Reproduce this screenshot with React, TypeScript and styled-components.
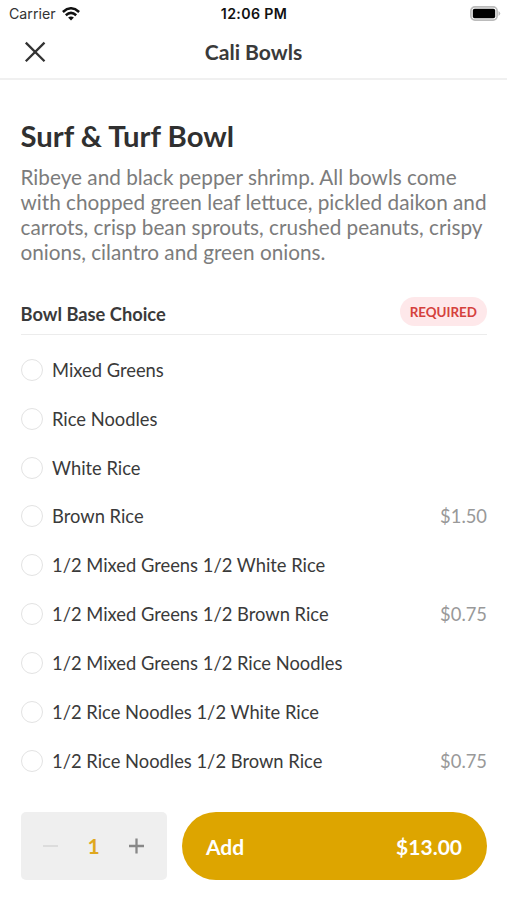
import React from "react";
import styled, { createGlobalStyle } from "styled-components";

const Global = createGlobalStyle`
  *{box-sizing:border-box}
  body{margin:0;background:#fff;font-family:Lato,sans-serif;color:#3a3a3a;overflow:hidden}
  button{font:inherit;border:0;background:none;padding:0;color:inherit}
  h1,h2,p{margin:0}
`;
const Screen = styled.div`height:900px;width:507px;display:flex;flex-direction:column;background:#fff;`;
const StatusBar = styled.div`height:26px;display:grid;grid-template-columns:1fr auto 1fr;align-items:center;padding:1px 6px 0 9px;font:500 14px/20px Inter,sans-serif;color:#111;`;
const Carrier = styled.div`display:flex;align-items:center;gap:6px;font-weight:400;font-size:14.2px;color:#333;`;
const Time = styled.div`font-weight:600;font-size:14.2px;letter-spacing:.35px;margin-right:2px;`;
const Battery = styled.svg`justify-self:end;display:block;`;
const Nav = styled.header`height:54px;display:grid;grid-template-columns:1fr auto 1fr;align-items:center;padding:0 24px;border-bottom:2px solid #f0f0f0;`;
const Close = styled.button`width:22px;height:22px;display:flex;`;
const NavTitle = styled.div`font-size:21.1px;font-weight:700;line-height:24px;`;
const Content = styled.main`flex:1;padding:38px 20px 0 20.5px;`;
const Title = styled.h1`font-size:29.3px;line-height:36px;font-weight:700;color:#303030;`;
const Description = styled.p`margin-top:11px;font-size:20.75px;line-height:25px;color:#7c7c7c;white-space:nowrap;`;
const GroupHead = styled.div`margin-top:32px;height:38px;display:flex;justify-content:space-between;align-items:flex-start;border-bottom:1px solid #ececec;`;
const GroupTitle = styled.h2`font-size:18.3px;font-weight:700;line-height:34px;`;
const Badge = styled.span`height:29px;padding:0 10px;border-radius:15px;background:#fee8ea;color:#d5413d;font-size:13.4px;line-height:31px;font-weight:700;`;
const Options = styled.div`padding-top:10.5px;`;
const Option = styled.div`height:48.85px;display:flex;align-items:center;font-size:18.35px;`;
const Radio = styled.span`width:22px;height:22px;border:1.5px solid #e3e3e3;border-radius:50%;margin-right:9.5px;`;
const Price = styled.span`margin-left:auto;color:#999;`;
const Footer = styled.footer`height:108px;padding:20px 20px 20px 20.5px;display:flex;gap:15px;`;
const Stepper = styled.div`width:146.5px;height:68px;border-radius:5px;background:#efefef;display:flex;align-items:center;justify-content:space-between;padding:0 23px 0 22.5px;`;
const Count = styled.span`color:#dfa81e;font-size:21px;line-height:24px;font-weight:700;padding-bottom:1px;`;
const AddButton = styled.button`flex:1;height:68px;border-radius:34px;background:#dda500;color:#fff;display:flex;align-items:center;justify-content:space-between;padding:0 25px 0 24px;font-size:21px;font-weight:700;`;

const options = [["Mixed Greens"],["Rice Noodles"],["White Rice"],["Brown Rice","$1.50"],["1/2 Mixed Greens 1/2 White Rice"],["1/2 Mixed Greens 1/2 Brown Rice","$0.75"],["1/2 Mixed Greens 1/2 Rice Noodles"],["1/2 Rice Noodles 1/2 White Rice"],["1/2 Rice Noodles 1/2 Brown Rice","$0.75"]];

export default function App(){
  return <><Global/><Screen>
    <StatusBar><Carrier>Carrier<svg width="18" height="14" viewBox="0 0 18 14" fill="none" stroke="#111" strokeWidth="2.5"><path d="M.9 5Q9-2.4 17.1 5M3.8 8.2Q9 3.6 14.2 8.2"/><path d="M9 13.6L6.1 10.6Q9 8.2 11.9 10.6Z" fill="#111" stroke="none"/></svg></Carrier><Time>12:06 PM</Time>
    <Battery width="31" height="15" viewBox="0 0 31 15"><rect x=".9" y=".9" width="26.2" height="13.2" rx="4" fill="none" stroke="#bbb" strokeWidth="1.7"/><rect x="2.8" y="2.8" width="22.4" height="9.4" rx="1.8"/><path d="M28.5 5Q32 7.5 28.5 10Z" fill="#bbb"/></Battery></StatusBar>
    <Nav><Close aria-label="Close"><svg width="22" height="22" viewBox="0 0 22 22" stroke="#333" strokeWidth="2.3"><path d="M1.8 1.6L20.5 20.3M20.5 1.6L1.8 20.3"/></svg></Close><NavTitle>Cali Bowls</NavTitle></Nav>
    <Content><Title>Surf &amp; Turf Bowl</Title><Description>Ribeye and black pepper shrimp. All bowls come<br/>with chopped green leaf lettuce, pickled daikon and<br/>carrots, crisp bean sprouts, crushed peanuts, crispy<br/>onions, cilantro and green onions.</Description>
    <GroupHead><GroupTitle>Bowl Base Choice</GroupTitle><Badge>REQUIRED</Badge></GroupHead>
    <Options>{options.map(([name,price])=><Option key={name}><Radio/>{name}{price&&<Price>{price}</Price>}</Option>)}</Options></Content>
    <Footer><Stepper><svg width="15" height="16" stroke="#dcdcdc" strokeWidth="2"><path d="M0 8H15"/></svg><Count>1</Count><svg width="15" height="16" stroke="#888" strokeWidth="2.3"><path d="M0 8H15M7.5 .5V15.5"/></svg></Stepper><AddButton><span>Add</span><span>$13.00</span></AddButton></Footer>
  </Screen></>;
}
